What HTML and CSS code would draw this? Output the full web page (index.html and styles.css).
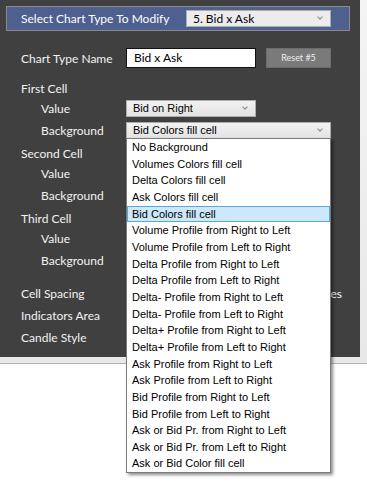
FILE: index.html
```html
<!DOCTYPE html>
<html lang="en">
<head>
<meta charset="UTF-8" />
<title>Chart Type Settings</title>
<link rel="stylesheet" href="styles.css">
</head>
<body>

<div id="frame">
  <div id="panel">
    <div class="header">
      <span class="header-label">Select Chart Type To Modify</span>
      <div class="select header-select">5. Bid x Ask<span class="chev"></span></div>
    </div>

    <div id="form">
      <div class="row name-row">
        <span class="label">Chart Type Name</span>
        <div class="input">Bid x Ask</div>
        <div class="button">Reset #5</div>
      </div>

      <div class="group">
        <div class="row"><span class="label">First Cell</span></div>
        <div class="row sub"><span class="label">Value</span><div class="select short">Bid on Right<span class="chev"></span></div></div>
        <div class="row sub gap"><span class="label">Background</span><div class="select wide">Bid Colors fill cell<span class="chev"></span></div></div>
      </div>

      <!-- these controls sit under the open list -->
      <div class="group">
        <div class="row"><span class="label">Second Cell</span></div>
        <div class="row sub"><span class="label">Value</span><div class="select short"></div></div>
        <div class="row sub gap"><span class="label">Background</span><div class="select wide"></div></div>
      </div>

      <div class="group">
        <div class="row"><span class="label">Third Cell</span></div>
        <div class="row sub"><span class="label">Value</span><div class="select short"></div></div>
        <div class="row sub gap"><span class="label">Background</span><div class="select wide"></div></div>
      </div>

      <div class="group bottom">
        <div class="row"><span class="label">Cell Spacing</span><span class="trail">es</span></div>
        <div class="row gap"><span class="label">Indicators Area</span></div>
        <div class="row gap"><span class="label">Candle Style</span></div>
      </div>
    </div>
  </div>
</div>

<ul id="dropdown">
  <li>No Background</li>
  <li>Volumes Colors fill cell</li>
  <li>Delta Colors fill cell</li>
  <li>Ask Colors fill cell</li>
  <li class="active">Bid Colors fill cell</li>
  <li>Volume Profile from Right to Left</li>
  <li>Volume Profile from Left to Right</li>
  <li>Delta Profile from Right to Left</li>
  <li>Delta Profile from Left to Right</li>
  <li>Delta- Profile from Right to Left</li>
  <li>Delta- Profile from Left to Right</li>
  <li>Delta+ Profile from Right to Left</li>
  <li>Delta+ Profile from Left to Right</li>
  <li>Ask Profile from Right to Left</li>
  <li>Ask Profile from Left to Right</li>
  <li>Bid Profile from Right to Left</li>
  <li>Bid Profile from Left to Right</li>
  <li>Ask or Bid Pr. from Right to Left</li>
  <li>Ask or Bid Pr. from Left to Right</li>
  <li>Ask or Bid Color fill cell</li>
</ul>

</body>
</html>
```

FILE: styles.css
```css
html, body {
  margin: 0; padding: 0;
  background: #fff;
}
body {
  position: relative;
  width: 367px;
  height: 484px;
  overflow: hidden;
  font-family: Lato, 'Open Sans', sans-serif;
  font-size: 12px;
}
#frame {
  width: 367px;
  padding: 0 7px 6px 0;
  box-sizing: border-box;
  background: linear-gradient(#f4f4f4, #e8e8e8);
  border-bottom: 1px solid #b4b4b4;
}
#panel {
  width: 360px;
  height: 357px;
  background: #404040;
  padding: 6px 0 0 6px;
  box-sizing: border-box;
}
.header {
  width: 344px;
  height: 25px;
  box-sizing: border-box;
  border: 1px solid #8a8a8a;
  background: #4e6090;
  display: flex;
  align-items: center;
  padding-left: 14px;
  color: #fff;
}
.header-label {
  width: 165px;
}
.select {
  position: relative;
  height: 17px;
  box-sizing: border-box;
  border: 1px solid #acacac;
  background: linear-gradient(#f2f2f2, #e3e3e3);
  color: #000;
  font-family: 'Liberation Sans', Arial, sans-serif;
  font-size: 11px;
  line-height: 15px;
  padding-left: 6px;
}
.header-select {
  width: 145px;
  font-family: Lato, 'Open Sans', sans-serif;
  font-size: 12px;
  background: #ececec;
}
.chev {
  position: absolute;
  right: 8px;
  top: 4px;
  width: 3px;
  height: 3px;
  border-right: 1px solid #888;
  border-bottom: 1px solid #888;
  transform: rotate(45deg);
}
#form {
  padding: 17px 0 0 15px;
  color: #f2f2f2;
}
.row {
  height: 20px;
  display: flex;
  align-items: center;
}
.row.gap {
  margin-top: 2px;
}
.label {
  width: 105px;
  flex: none;
  box-sizing: border-box;
}
.sub .label {
  padding-left: 20px;
}
.name-row {
  margin-bottom: 10px;
}
.group + .group {
  margin-top: 3px;
}
.group.bottom {
  margin-top: 13px;
}
.input {
  width: 130px;
  height: 20px;
  box-sizing: border-box;
  border: 1px solid #111;
  background: #fff;
  color: #000;
  padding-left: 7px;
  line-height: 18px;
}
.button {
  width: 65px;
  height: 20px;
  margin-left: 10px;
  box-sizing: border-box;
  border: 1px solid #6c6c6c;
  background: #7a7a7a;
  color: #ececec;
  font-size: 9px;
  text-align: center;
  line-height: 18px;
}
.short {
  width: 130px;
}
.wide {
  width: 205px;
}
.trail {
  margin-left: auto;
  margin-right: 18px;
}
#dropdown {
  position: absolute;
  top: 138px;
  left: 126px;
  width: 205px;
  margin: 0;
  padding: 0;
  list-style: none;
  box-sizing: border-box;
  border: 1px solid #7a7a7a;
  background: #fff;
  box-shadow: 2px 2px 3px rgba(0, 0, 0, 0.45);
  font-family: 'Liberation Sans', Arial, sans-serif;
  font-size: 11px;
}
#dropdown li {
  height: 16.66px;
  line-height: 16.66px;
  padding-left: 5px;
  box-sizing: border-box;
  color: #000;
  white-space: nowrap;
}
#dropdown li.active {
  background: #cde8f8;
  border: 1px solid #5aa7de;
  padding-left: 4px;
  line-height: 14.66px;
}
```
